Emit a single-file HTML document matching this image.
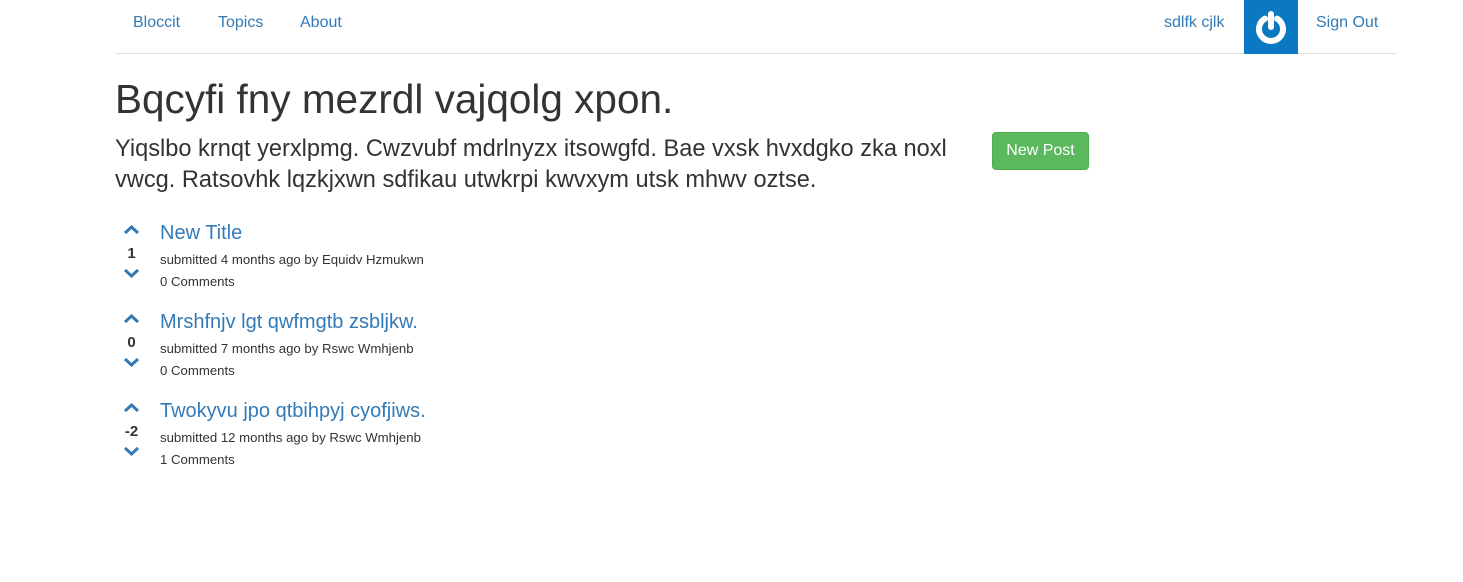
<!DOCTYPE html>
<html><head><style>
body{margin:0;font-family:"Liberation Sans",sans-serif;color:#333;background:#fff}
a{color:#337ab7;text-decoration:none}
.nav{position:absolute;left:115px;width:1282px;top:0;height:53px;border-bottom:1px solid #e0e0e0}
.nav a{position:absolute;top:13px;font-size:16px;line-height:20px}
.grav{position:absolute;left:1129px;top:0;width:54px;height:54px;background:#0b79c1}
h1{position:absolute;left:115px;top:76px;margin:0;font-size:40.5px;font-weight:500;line-height:46px}
.lead{position:absolute;left:115px;top:134px;width:850px;font-size:23.6px;line-height:31px;margin:0}
.btn{position:absolute;left:992px;top:132px;width:97px;height:38px;background:#5cb85c;border:1px solid #4cae4c;border-radius:4px;box-sizing:border-box;color:#fff;font-size:16px;text-align:center;line-height:36px}
.post{position:absolute;left:115px;width:600px;height:80px}
.vote{position:absolute;left:8px;top:0;width:17px;text-align:center}
.vote .n{position:absolute;top:25px;width:17px;font-weight:bold;font-size:15px;line-height:18px}
.t{position:absolute;left:45px;top:1px;font-size:20px;line-height:24px}
.m{position:absolute;left:45px;font-size:13.2px;line-height:16px;color:#333}
</style></head><body>
<div class="nav">
<a style="left:18px">Bloccit</a><a style="left:103px">Topics</a><a style="left:185px">About</a>
<a style="left:1049px">sdlfk cjlk</a>
<div class="grav"><svg width="54" height="54" viewBox="0 0 54 54"><path d="M21 18.6 A12 12 0 1 0 33 18.6" fill="none" stroke="#fff" stroke-width="6" stroke-linecap="round"/><line x1="27" y1="14" x2="27" y2="27" stroke="#fff" stroke-width="6" stroke-linecap="round"/></svg></div>
<a style="left:1201px">Sign Out</a>
</div>
<h1>Bqcyfi fny mezrdl vajqolg xpon.</h1>
<p class="lead">Yiqslbo krnqt yerxlpmg. Cwzvubf mdrlnyzx itsowgfd. Bae vxsk hvxdgko zka noxl vwcg. Ratsovhk lqzkjxwn sdfikau utwkrpi kwvxym utsk mhwv oztse.</p>
<div class="btn">New Post</div>

<div class="post" style="top:220px">
<div class="vote"><svg width="17" height="10" style="position:absolute;top:5px;left:0"><path d="M2 8 L8.5 2 L15 8" fill="none" stroke="#337ab7" stroke-width="3"/></svg><div class="n">1</div><svg width="17" height="10" style="position:absolute;top:48px;left:0"><path d="M2 2 L8.5 8 L15 2" fill="none" stroke="#337ab7" stroke-width="3"/></svg></div>
<a class="t">New Title</a><div class="m" style="top:32px">submitted 4 months ago by Equidv Hzmukwn</div><a class="m" style="top:54px">0 Comments</a></div>

<div class="post" style="top:309px">
<div class="vote"><svg width="17" height="10" style="position:absolute;top:5px;left:0"><path d="M2 8 L8.5 2 L15 8" fill="none" stroke="#337ab7" stroke-width="3"/></svg><div class="n">0</div><svg width="17" height="10" style="position:absolute;top:48px;left:0"><path d="M2 2 L8.5 8 L15 2" fill="none" stroke="#337ab7" stroke-width="3"/></svg></div>
<a class="t">Mrshfnjv lgt qwfmgtb zsbljkw.</a><div class="m" style="top:32px">submitted 7 months ago by Rswc Wmhjenb</div><a class="m" style="top:54px">0 Comments</a></div>

<div class="post" style="top:398px">
<div class="vote"><svg width="17" height="10" style="position:absolute;top:5px;left:0"><path d="M2 8 L8.5 2 L15 8" fill="none" stroke="#337ab7" stroke-width="3"/></svg><div class="n">-2</div><svg width="17" height="10" style="position:absolute;top:48px;left:0"><path d="M2 2 L8.5 8 L15 2" fill="none" stroke="#337ab7" stroke-width="3"/></svg></div>
<a class="t">Twokyvu jpo qtbihpyj cyofjiws.</a><div class="m" style="top:32px">submitted 12 months ago by Rswc Wmhjenb</div><a class="m" style="top:54px">1 Comments</a></div>
</body></html>
